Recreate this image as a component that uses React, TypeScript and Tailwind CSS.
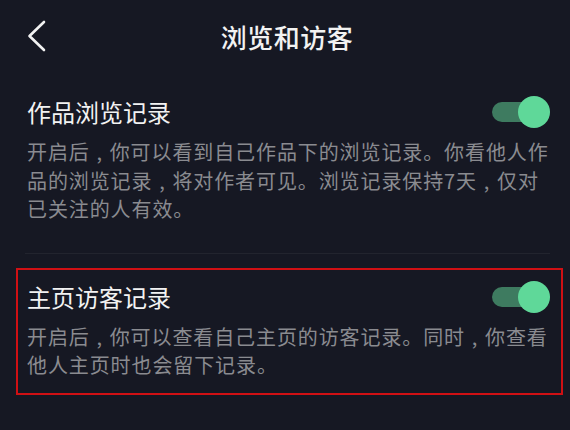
import React from "react";

const font = { fontFamily: '"Noto Sans CJK SC", "Noto Sans", sans-serif' };

function Toggle() {
  return (
    <div className="relative w-[58px] h-[32px] shrink-0">
      <div className="absolute left-0 top-[6px] w-[42px] h-[20px] rounded-full bg-[#3e7b60]" />
      <div className="absolute right-0 top-0 w-[32px] h-[32px] rounded-full bg-[#5fd899]" />
    </div>
  );
}

// the comma sits in the middle of its cell, like on the phone
function Line({ text }: { text: string }) {
  const parts = text.split("，");
  return (
    <span className="block whitespace-nowrap">
      {parts.map((p, i) => (
        <React.Fragment key={i}>
          {p}
          {i < parts.length - 1 && <span className="inline-block w-[1em] text-center">,</span>}
        </React.Fragment>
      ))}
    </span>
  );
}

function Setting({ title, lines }: { title: string; lines: string[] }) {
  return (
    <div>
      <div className="flex items-center justify-between">
        <span className="text-[24px] leading-[32px] text-[#f2f2f2]">{title}</span>
        <Toggle />
      </div>
      <p className="mt-[10px] text-[20px] leading-[28.5px] tracking-[0.9px] text-[#8a8b90]">
        {lines.map((l, i) => (
          <Line key={i} text={l} />
        ))}
      </p>
    </div>
  );
}

export default function App() {
  return (
    <div className="w-[570px] h-[430px] bg-[#161823] overflow-hidden" style={font}>
      {/* header */}
      <div className="relative h-[72px] flex items-center justify-center">
        <svg className="absolute left-[27px] top-[20px]" width="19" height="32" viewBox="0 0 19 32" fill="none">
          <polyline points="17,2 2.5,16 17,30" stroke="#f2f2f2" strokeWidth="2.6" strokeLinecap="round" strokeLinejoin="round" />
        </svg>
        <span className="text-[26px] font-medium text-[#f2f2f2] tracking-[0.5px] pl-[4px]">浏览和访客</span>
      </div>

      <div className="pl-[27px] pr-[20px] pt-[24px]">
        <Setting
          title="作品浏览记录"
          lines={[
            "开启后，你可以看到自己作品下的浏览记录。你看他人作",
            "品的浏览记录，将对作者可见。浏览记录保持7天，仅对",
            "已关注的人有效。",
          ]}
        />
        <div className="mt-[29px] h-px bg-[#22242e] -ml-[2px]" />
      </div>

      <div className="mx-[16px] mt-[14px] w-[547px] border-2 border-[#d01014] pl-[9px] pr-[11px] pt-[11px] pb-[13px]">
        <Setting
          title="主页访客记录"
          lines={[
            "开启后，你可以查看自己主页的访客记录。同时，你查看",
            "他人主页时也会留下记录。",
          ]}
        />
      </div>
    </div>
  );
}
